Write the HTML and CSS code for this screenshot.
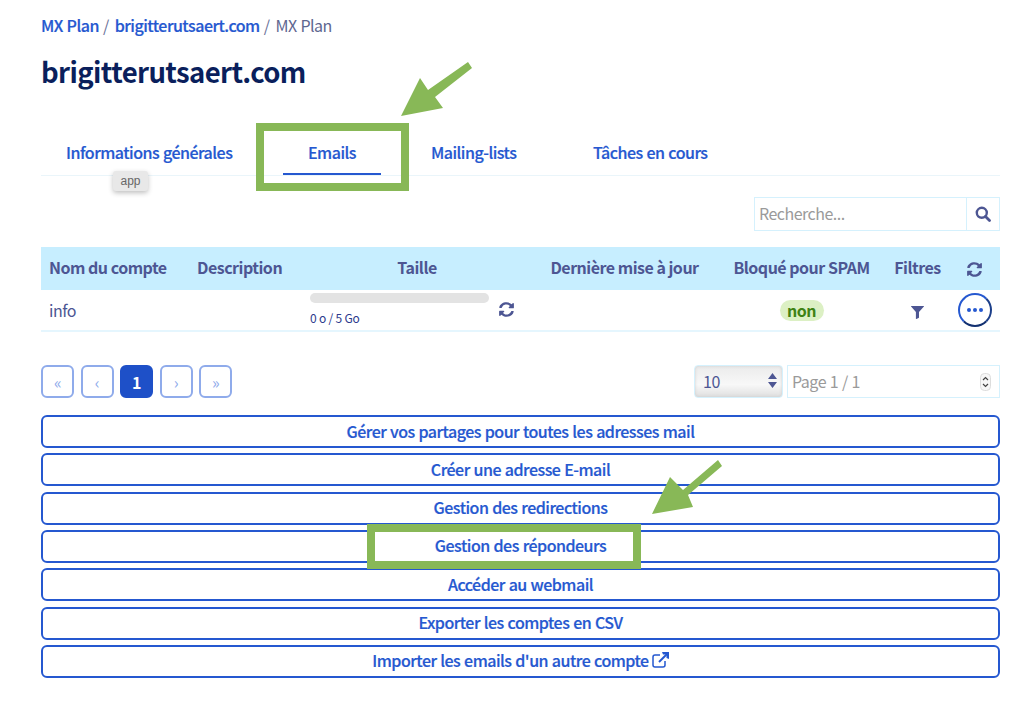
FILE: index.html
```html
<!DOCTYPE html>
<html lang="fr">
<head>
<meta charset="utf-8">
<title>brigitterutsaert.com</title>
<link rel="stylesheet" href="styles.css">
</head>
<body>
<main class="page">
  <nav class="crumbs"><a>MX Plan</a><span class="sep">/</span><a>brigitterutsaert.com</a><span class="sep">/</span><span class="cur">MX Plan</span></nav>
  <h1 class="title">brigitterutsaert.com</h1>
  <div class="tabs">
    <a class="tab tab-info">Informations générales</a>
    <a class="tab tab-mail"><span>Emails</span></a>
    <a class="tab tab-list">Mailing-lists</a>
    <a class="tab tab-task">Tâches en cours</a>
  </div>
  <div class="searchbar">
    <div class="search"><span class="ph">Recherche...</span>
      <span class="search-btn"><svg width="16" height="16" viewBox="0 0 16 16"><circle cx="6.800" cy="6.800" r="5" fill="none" stroke="#4d5693" stroke-width="2.400"/><path d="M10.500 10.500 14.500 14.500" stroke="#4d5693" stroke-width="2.800" stroke-linecap="round"/></svg></span>
    </div>
  </div>
  <table class="grid">
    <colgroup><col class="c1"><col class="c2"><col class="c3"><col class="c4"><col class="c5"><col class="c6"><col class="c7"></colgroup>
    <thead><tr>
      <th class="left">Nom du compte</th><th class="left">Description</th><th>Taille</th><th>Dernière mise à jour</th><th>Bloqué pour SPAM</th><th>Filtres</th>
      <th><svg class="sync" width="15" height="15" viewBox="0 0 512 512"><path fill="#4d5693" d="M370.700 133.300A168 168 0 0 0 94 194.600c-1.700 6.700-7.500 11.400-14.400 11.400H22.500c-9.400 0-16.500-8.500-14.800-17.700C29.300 73.800 129.800 8 256 8c67.900 0 129.600 26.800 175.100 70.300L467.500 41.900C482.600 26.800 508.500 37.500 508.500 58.900V192c0 13.300-10.700 24-24 24H351.400c-21.400 0-32.100-25.900-17-41zM24 296h133.100c21.400 0 32.100 25.900 17 41l-36.400 41.700a168 168 0 0 0 279.300-61.300c1.700-6.700 7.500-11.400 14.400-11.400h57.100c9.400 0 16.500 8.500 14.800 17.700C482.700 438.200 382.200 504 256 504c-67.900 0-129.600-26.800-175.100-70.300l-36.400 36.400C29.400 485.200 3.500 474.500 3.500 453.100V320c0-13.300 10.700-24 20.500-24z"/></svg></th>
    </tr></thead>
    <tbody><tr>
      <td class="left name">info</td><td></td>
      <td class="size"><div class="size-wrap"><div class="usage"><div class="bar"></div><small class="quota">0 o / 5 Go</small></div>
        <svg class="sync" width="15" height="15" viewBox="0 0 512 512"><path fill="#4d5693" d="M370.700 133.300A168 168 0 0 0 94 194.600c-1.700 6.700-7.500 11.400-14.400 11.400H22.500c-9.400 0-16.500-8.500-14.800-17.700C29.300 73.800 129.800 8 256 8c67.900 0 129.600 26.800 175.100 70.300L467.500 41.900C482.600 26.800 508.500 37.500 508.500 58.900V192c0 13.300-10.700 24-24 24H351.400c-21.400 0-32.100-25.900-17-41zM24 296h133.100c21.400 0 32.100 25.900 17 41l-36.400 41.700a168 168 0 0 0 279.300-61.300c1.700-6.700 7.500-11.400 14.400-11.400h57.100c9.400 0 16.500 8.500 14.800 17.700C482.700 438.200 382.200 504 256 504c-67.900 0-129.600-26.800-175.100-70.300l-36.400 36.400C29.400 485.200 3.500 474.500 3.500 453.100V320c0-13.300 10.700-24 20.500-24z"/></svg></div></td>
      <td></td>
      <td><span class="badge">non</span></td>
      <td><svg class="funnel" width="13" height="13" viewBox="0 0 13 13"><path fill="#4d5693" d="M.3 0h12.400c.3 0 .4.400.2.600L8 6v5.500c0 .3-.2.500-.4.600L5.400 13c-.2.100-.5 0-.5-.3V6L.1.600C-.1.400 0 0 .3 0z"/></svg></td>
      <td><span class="more"><i></i><i></i><i></i></span></td>
    </tr></tbody>
  </table>
  <div class="pager-row">
    <div class="pager">
      <span class="pg">«</span><span class="pg">‹</span><span class="pg on">1</span><span class="pg">›</span><span class="pg">»</span>
    </div>
    <div class="pager-right">
      <div class="select"><span>10</span><svg width="9" height="15" viewBox="0 0 9 15"><path fill="#4d5693" d="M4.500 0 9 6H0zM4.500 15 0 9h9z"/></svg></div>
      <div class="pageinput"><span class="ph">Page 1 / 1</span>
        <svg width="11" height="18" viewBox="0 0 11 18"><rect x=".5" y=".5" width="10" height="17" rx="4" fill="#f7f7f7" stroke="#ddd"/><path d="M3 7l2.500-2.500L8 7M3 11l2.500 2.500L8 11" fill="none" stroke="#444" stroke-width="1.200"/></svg>
      </div>
    </div>
  </div>
  <div class="actions">
    <a class="act">Gérer vos partages pour toutes les adresses mail</a>
    <a class="act">Créer une adresse E-mail</a>
    <a class="act">Gestion des redirections</a>
    <a class="act">Gestion des répondeurs</a>
    <a class="act">Accéder au webmail</a>
    <a class="act">Exporter les comptes en CSV</a>
    <a class="act">Importer les emails d'un autre compte<svg class="ext" width="17" height="16" viewBox="0 0 17 16"><path d="M8 3H3a2 2 0 0 0-2 2v8a2 2 0 0 0 2 2h8a2 2 0 0 0 2-2V9" fill="none" stroke="#2558d0" stroke-width="1.500"/><path d="M7 10 15 2" stroke="#2558d0" stroke-width="2"/><path fill="#2558d0" d="M10 0h7v7l-2.500-1V2.500H11z"/></svg></a>
  </div>
</main>

<div class="tip">app</div>
<div class="hl hl-tab"></div>
<div class="hl hl-btn"></div>
<svg class="arrow arrow-a" width="74" height="58" viewBox="0 0 74 58"><path fill="#88b857" d="M1 56 20 18 28 30 68 2 72 8 35 37 43 48z"/></svg>
<svg class="arrow arrow-b" width="74" height="58" viewBox="0 0 74 58"><path fill="#88b857" d="M2 56 20 19 33 32 68 2 72 8 38 37 43 49z"/></svg>
</body>
</html>
```
FILE: styles.css
```css
* { box-sizing: border-box; }
html, body { margin: 0; padding: 0; background: #fff; }
body {
  font-family: "Noto Sans CJK JP", "Noto Sans", sans-serif;
  font-size: 16px;
  letter-spacing: -0.5px;
  word-spacing: 0.7px;
  color: #4d5693;
  width: 1024px;
  height: 715px;
  overflow: hidden;
  position: relative;
}
.page { padding: 13px 24px 0 41px; }
.crumbs { display: flex; height: 24px; line-height: 24px; font-size: 16px; font-weight: 500; }
.crumbs a { color: #2558d0; -webkit-text-stroke: 0.2px #2558d0; }
.crumbs .sep { margin: 0 6px 0 4px; color: #6a7199; font-weight: 400; }
.crumbs .cur { color: #5e6690; font-weight: 400; }
.title { margin: 16px 0 0; height: 36px; line-height: 36px; font-size: 27.5px; letter-spacing: -0.6px; font-weight: 700; color: #0a1f5c; }
.tabs { display: flex; margin-top: 49px; height: 38px; border-bottom: 1px solid #eaf5fa; position: relative; }
.tab { font-weight: 500; color: #2558d0; line-height: 28px; -webkit-text-stroke: 0.2px #2558d0; }
.tab-info { margin-left: 25px; width: 217px; }
.tab-mail { width: 98px; text-align: center; height: 37px; border-bottom: 2px solid #2558d0; margin-right: 50px; }
.tab-list { width: 162px; }
.searchbar { display: flex; justify-content: flex-end; margin-top: 21px; }
.search { width: 246px; height: 34px; border: 1px solid #d5f1fd; display: flex; align-items: center; }
.ph { color: #9a9a9a; padding-bottom: 2px; }
.search .ph { flex: 1; padding-left: 4px; }
.search-btn { width: 33px; height: 32px; border-left: 1px solid #d5f1fd; display: flex; align-items: center; justify-content: center; }
.grid { width: 959px; margin-top: 16px; border-collapse: collapse; table-layout: fixed; }
.c1 { width: 148px; } .c2 { width: 113px; } .c3 { width: 230px; } .c4 { width: 185px; }
.c5 { width: 169px; } .c6 { width: 63px; } .c7 { width: 51px; }
.grid th { height: 43px; background: #c7eeff; padding: 0 0 4px; font-weight: 700; font-size: 16px; word-spacing: 0; text-align: center; color: #4d5693; }
.grid td { height: 41px; padding: 0; text-align: center; border-bottom: 2px solid #e5f6fe; vertical-align: middle; }
.grid th.left, .grid td.left { text-align: left; padding-left: 8px; }
.grid td.size { vertical-align: top; padding-top: 3px; }
.sync, .funnel { vertical-align: middle; display: inline-block; }
.size-wrap { display: flex; padding-left: 8px; align-items: center; }
.usage { width: 179px; text-align: left; }
.bar { height: 10px; border-radius: 5px; background: #e3e3e3; }
.quota { display: block; font-size: 12px; line-height: 14px; margin-top: 8px; letter-spacing: -0.2px; word-spacing: 0; color: #2c3a8c; }
.size-wrap .sync { margin-left: 10px; }
.badge { display: inline-block; height: 21px; line-height: 21px; width: 44px; border-radius: 11px; background: #dcf0c4; color: #3f8214; font-weight: 700; font-size: 16px; text-align: center; }
.more { display: inline-flex; width: 34px; height: 34px; border-radius: 50%; border: 2px solid #2558d0; border-bottom-color: #123070; border-right-color: #1c3f8a; align-items: center; justify-content: center; gap: 2px; vertical-align: middle; }
.more i { width: 4px; height: 4px; border-radius: 50%; background: #2558d0; }
.pager-row { display: flex; justify-content: space-between; margin-top: 33px; height: 33px; }
.pager { display: flex; gap: 6.5px; }
.pg { width: 33px; height: 33px; border: 2px solid #8fabeb; border-radius: 6px; color: #8fabeb; display: flex; align-items: center; justify-content: center; font-size: 16px; }
.pg.on { background: #1e50c8; border-color: #1e50c8; color: #fff; font-weight: 700; }
.pager-right { display: flex; gap: 4px; }
.select { width: 89px; height: 33px; border: 1px solid #d5f1fd; border-radius: 4px; background: linear-gradient(#ebebeb, #f8f8f8 60%, #dfdfdf); display: flex; align-items: center; justify-content: space-between; padding: 0 5px 2px 8px; box-shadow: inset 0 0 3px #ccc; }
.pageinput { width: 213px; height: 33px; border: 1px solid #d5f1fd; display: flex; align-items: center; justify-content: space-between; padding: 0 8px 0 4px; }
.actions { display: flex; flex-direction: column; gap: 5.33px; margin-top: 17px; }
.act { display: flex; align-items: center; justify-content: center; gap: 3px; height: 33px; padding-bottom: 2px; border: 2px solid #2558d0; border-radius: 6px; color: #2558d0; font-weight: 500; font-size: 16px; -webkit-text-stroke: 0.2px #2558d0; }
.tip { position: absolute; left: 113px; top: 171px; width: 35px; height: 20px; line-height: 20px; font-family: "Liberation Sans", sans-serif; letter-spacing: 0; text-align: center; font-size: 12px; background: #e8e8e8; color: #666; border-radius: 3px; box-shadow: 0 2px 5px rgba(0,0,0,.25); }
.hl { position: absolute; border: 8px solid #88b857; }
.hl-tab { left: 256px; top: 123px; width: 153px; height: 68px; }
.hl-btn { left: 367px; top: 524px; width: 274px; height: 45px; }
.arrow { position: absolute; }
.arrow-a { left: 400px; top: 60px; }
.arrow-b { left: 650px; top: 458px; }
```
